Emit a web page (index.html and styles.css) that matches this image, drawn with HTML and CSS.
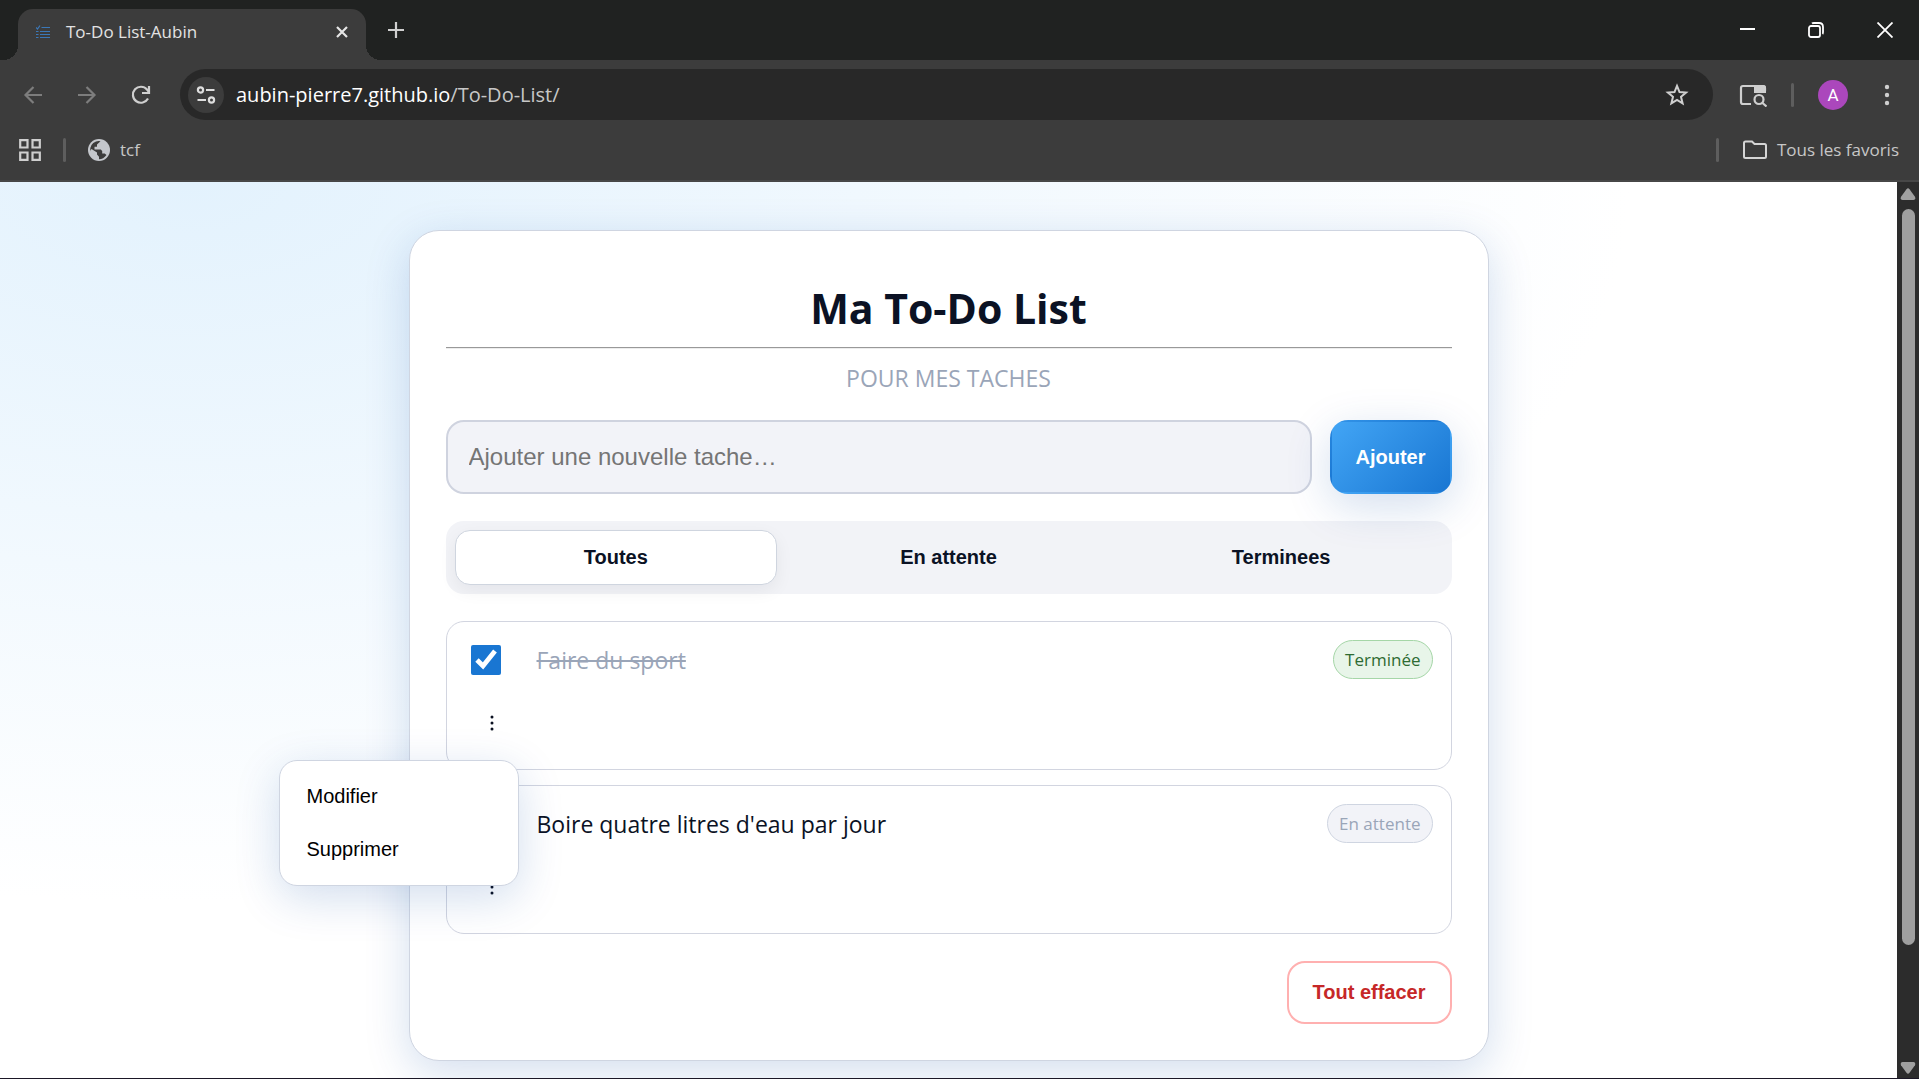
FILE: index.html
```html
<!DOCTYPE html>
<html lang="fr">
<head>
<meta charset="utf-8">
<meta name="viewport" content="width=device-width, initial-scale=1">
<title>To-Do List-Aubin</title>
<link rel="stylesheet" href="styles.css">
</head>
<body>
<div class="browser">
  <header class="chrome">
    <div class="titlebar">
      <div class="tab">
        <svg class="tab-favicon" width="14" height="14" viewBox="0 0 14 14" fill="none" stroke="#3b78b8" aria-hidden="true"><path d="M0 2.500l1.500 1.500L4 .5M5.500 2.500H14M0 6.500h2.500M4 6.500h10M0 9.500h2.500M4 9.500h10M0 12.500h2.500M4 12.500h10" stroke-width="1.200"/></svg>
        <span class="tab-title">To-Do List-Aubin</span>
        <button class="icon-btn tab-close" aria-label="Fermer l'onglet"><svg width="12" height="12" viewBox="0 0 12 12" stroke="#e6e6e6" stroke-width="2.200"><path d="M1 1l10 10M11 1L1 11"/></svg></button>
      </div>
      <button class="icon-btn new-tab" aria-label="Nouvel onglet"><svg width="16" height="16" viewBox="0 0 16 16" stroke="#d0d0d0" stroke-width="2.200"><path d="M8 0v16M0 8h16"/></svg></button>
      <div class="window-controls">
        <button class="icon-btn" aria-label="Réduire"><svg width="16" height="16" viewBox="0 0 16 16" stroke="#fff" stroke-width="2"><path d="M1 7h15"/></svg></button>
        <button class="icon-btn" aria-label="Restaurer"><svg width="16" height="16" viewBox="0 0 16 16" fill="none" stroke="#fff" stroke-width="1.800"><rect x="1" y="4" width="11" height="11" rx="2"/><path d="M4 1.500Q4.500 1 6 1h5q4 0 4 4v5q0 1.500-.5 2"/></svg></button>
        <button class="icon-btn" aria-label="Fermer"><svg width="16" height="16" viewBox="0 0 16 16" stroke="#fff" stroke-width="1.800"><path d="M.5.5l15 15M15.500.5l-15 15"/></svg></button>
      </div>
    </div>

    <div class="toolbar">
      <button class="icon-btn nav-btn" aria-label="Précédent"><svg width="20" height="20" viewBox="0 0 20 20" fill="none" stroke="#7d7d7d" stroke-width="2.200"><path d="M19 10H2M10.500 2L2.500 10l8 8"/></svg></button>
      <button class="icon-btn nav-btn" aria-label="Suivant"><svg width="20" height="20" viewBox="0 0 20 20" fill="none" stroke="#7d7d7d" stroke-width="2.200"><path d="M1 10h17M9.500 2l8 8-8 8"/></svg></button>
      <button class="icon-btn nav-btn" aria-label="Actualiser"><svg width="20" height="20" viewBox="0 0 20 20" fill="none" stroke="#cfcfcf" stroke-width="2.200"><path d="M17 13.500A8 8 0 1 1 16 4.500L18 7"/><path d="M18 1v7h-7"/></svg></button>
      <div class="omnibox">
        <button class="icon-btn site-info" aria-label="Informations sur le site"><svg width="20" height="20" viewBox="0 0 20 20" fill="none" stroke="#dedede" stroke-width="2.200"><circle cx="4.500" cy="5" r="2.600"/><path d="M10 5h8.500M1.500 15H10"/><circle cx="15.500" cy="15" r="2.600"/></svg></button>
        <span class="url"><span class="url-host">aubin-pierre7.github.io</span>/To-Do-List/</span>
        <button class="icon-btn" aria-label="Ajouter aux favoris"><svg width="24" height="24" viewBox="0 0 24 24" fill="none" stroke="#cfcfcf" stroke-width="2"><path d="M12 2.800l2.500 6.200 6.600.5-5.100 4.300 1.600 6.600L12 16.900l-5.600 3.500L8 13.800 2.900 9.500 9.500 9z"/></svg></button>
      </div>
      <div class="toolbar-end">
        <button class="icon-btn" aria-label="Rechercher dans la page"><svg width="28" height="24" viewBox="0 0 28 24" fill="none" stroke="#cfcfcf" stroke-width="2.200"><path d="M12 21H4q-2 0-2-2V5q0-2 2-2h20q2 0 2 2v3"/><path d="M15 2h9q3 0 3 3v5H15z" fill="#cfcfcf" stroke="none"/><circle cx="20" cy="16.500" r="4.500"/><path d="M23 19.500l4.500 4"/></svg></button>
        <span class="divider"></span>
        <button class="avatar" aria-label="Profil A">A</button>
        <button class="icon-btn" aria-label="Menu"><svg width="6" height="24" viewBox="0 0 6 24" fill="#cfcfcf"><circle cx="3" cy="4" r="2.200"/><circle cx="3" cy="12" r="2.200"/><circle cx="3" cy="20" r="2.200"/></svg></button>
      </div>
    </div>

    <nav class="bookmarks" aria-label="Favoris">
      <button class="icon-btn" aria-label="Applications"><svg width="22" height="22" viewBox="0 0 22 22" fill="none" stroke="#cfcfcf" stroke-width="2.200"><path d="M1.200 1.200h7.300v7.300H1.200zM13.500 1.200h7.300v7.300h-7.300zM1.200 13.500h7.300v7.300H1.200zM13.500 13.500h7.300v7.300h-7.300z"/></svg></button>
      <span class="divider"></span>
      <a class="bookmark" href="#"><svg width="22" height="22" viewBox="0 0 22 22" aria-hidden="true"><circle cx="11" cy="11" r="11" fill="#c4c7cc"/><path d="M12.500 2.200L9 5.500v2.300H6.500v2.700h6.300l1.400 1.500v2.500h2.500l1.800 1.500q-3 4.200-7.500 4.200v-2.500L9 15.500v-2L3.500 10Q2.300 11 2.200 12.500 1.500 5 8 2.500q2-.8 4.500-.3z" fill="#3c3c3c"/></svg>tcf</a>
      <div class="bookmarks-end">
        <span class="divider"></span>
        <button class="bookmark"><svg width="24" height="20" viewBox="0 0 24 20" fill="none" stroke="#d5d5d5" stroke-width="2" aria-hidden="true"><path d="M1 3q0-1.500 1.500-1.500H9L11.500 4h10Q23 4 23 5.500v11q0 1.500-1.500 1.500h-19Q1 18 1 16.500z"/></svg>Tous les favoris</button>
      </div>
    </nav>
  </header>

  <div class="viewport">
    <main class="page">
      <section class="card">
        <h1 class="title">Ma To-Do List</h1>
        <hr class="rule">
        <p class="subtitle">POUR MES TACHES</p>

        <form class="add-form">
          <input class="add-input" type="text" placeholder="Ajouter une nouvelle tache…" aria-label="Nouvelle tache">
          <button class="add-btn" type="button">Ajouter</button>
        </form>

        <div class="filters">
          <button class="filter filter-active">Toutes</button>
          <button class="filter">En attente</button>
          <button class="filter">Terminees</button>
        </div>

        <ul class="tasks">
          <li class="task">
            <input class="task-check" type="checkbox" id="task-1" checked>
            <label class="task-label task-label-done" for="task-1">Faire du sport</label>
            <span class="badge badge-done">Terminée</span>
            <div class="task-menu">
              <button class="kebab" aria-label="Options"><svg width="4" height="16" viewBox="0 0 4 16" fill="#0a1020"><circle cx="2" cy="2" r="1.500"/><circle cx="2" cy="8" r="1.500"/><circle cx="2" cy="14" r="1.500"/></svg></button>
              <div class="popup">
                <button class="popup-item">Modifier</button>
                <button class="popup-item">Supprimer</button>
              </div>
            </div>
          </li>
          <li class="task">
            <input class="task-check" type="checkbox" id="task-2">
            <label class="task-label" for="task-2">Boire quatre litres d'eau par jour</label>
            <span class="badge">En attente</span>
            <div class="task-menu">
              <button class="kebab" aria-label="Options"><svg width="4" height="16" viewBox="0 0 4 16" fill="#0a1020"><circle cx="2" cy="2" r="1.500"/><circle cx="2" cy="8" r="1.500"/><circle cx="2" cy="14" r="1.500"/></svg></button>
            </div>
          </li>
        </ul>

        <div class="actions">
          <button class="clear-btn">Tout effacer</button>
        </div>
      </section>
    </main>
    <div class="scrollbar" aria-hidden="true">
      <svg width="16" height="12" viewBox="0 0 16 12" fill="#a0a0a0"><path d="M6.500 1.200Q8-.5 9.500 1.200l5.500 7.500Q16 12 13.500 12h-11Q0 12 1 8.700z"/></svg>
      <span class="scroll-thumb"></span>
      <span class="scroll-rest"></span>
      <svg width="16" height="12" viewBox="0 0 16 12" fill="#a0a0a0"><path d="M6.500 10.800Q8 12.500 9.500 10.800L15 3.300Q16 0 13.500 0h-11Q0 0 1 3.300z"/></svg>
    </div>
  </div>
</div>
</body>
</html>
```
FILE: styles.css
```css
* {
  box-sizing: border-box;
}

body {
  margin: 0;
  font-family: "Open Sans", "Noto Sans", sans-serif;
  color: #0b1224;
}

button {
  margin: 0;
  padding: 0;
  border: 0;
  background: none;
  font-family: "Liberation Sans", Arial, sans-serif;
  font-size: 20px;
  color: #000;
  cursor: pointer;
}

svg {
  display: block;
  flex: none;
}

.browser {
  display: flex;
  flex-direction: column;
  height: 100vh;
  border-bottom: 1px solid #1b1726;
}

/* Browser chrome */
.chrome {
  flex: none;
  background: #3c3c3c;
  border-bottom: 2px solid #474747;
}

.titlebar {
  display: flex;
  align-items: flex-end;
  height: 60px;
  padding-left: 18px;
  background: #202221;
}

.tab {
  position: relative;
  display: flex;
  align-items: center;
  width: 348px;
  height: 51px;
  padding: 0 18px 6px;
  border-radius: 15px 15px 0 0;
  background: #3c3c3c;
}

.tab::before,
.tab::after {
  content: "";
  position: absolute;
  bottom: 0;
  width: 15px;
  height: 15px;
}

.tab::before {
  right: 100%;
  background: radial-gradient(circle at 0 0, transparent 15px, #3c3c3c 15px);
}

.tab::after {
  left: 100%;
  background: radial-gradient(circle at 100% 0, transparent 15px, #3c3c3c 15px);
}

.tab-title {
  flex: 1;
  margin-left: 16px;
  font-size: 17px;
  line-height: 24px;
  color: #e3e3e3;
}

.icon-btn {
  display: flex;
  align-items: center;
  justify-content: center;
}

.new-tab {
  height: 60px;
  margin-left: 22px;
}

.window-controls {
  display: flex;
  margin-left: auto;
}

.window-controls .icon-btn {
  width: 69px;
  height: 60px;
}

.toolbar {
  display: flex;
  align-items: center;
  padding: 9px 29px 0 6px;
}

.nav-btn {
  width: 54px;
  height: 51px;
}

.omnibox {
  flex: 1;
  display: flex;
  align-items: center;
  height: 51px;
  margin-left: 12px;
  padding: 0 24px 0 8px;
  border-radius: 26px;
  background: #282828;
}

.site-info {
  width: 36px;
  height: 36px;
  border-radius: 50%;
  background: #3c3c3c;
}

.url {
  flex: 1;
  margin-left: 12px;
  font-size: 20px;
  line-height: 28px;
  color: #c7c7c7;
}

.url-host {
  color: #fff;
}

.toolbar-end {
  display: flex;
  align-items: center;
  gap: 24px;
  margin-left: 26px;
}

.divider {
  width: 3px;
  height: 24px;
  border-radius: 2px;
  background: #5e5e5e;
}

.avatar {
  width: 30px;
  height: 30px;
  border-radius: 50%;
  background: #ab47bc;
  color: #fff;
  font-family: Roboto, sans-serif;
  font-size: 17px;
}

.toolbar-end .avatar + .icon-btn {
  margin-left: 12px;
}

.bookmarks {
  display: flex;
  align-items: center;
  gap: 22px;
  height: 60px;
  padding: 0 20px 0 19px;
}

.bookmark {
  display: flex;
  align-items: center;
  gap: 10px;
  font-family: "Open Sans", "Noto Sans", sans-serif;
  font-size: 17px;
  line-height: 24px;
  color: #c7c7c7;
  text-decoration: none;
}

.bookmarks-end {
  display: flex;
  align-items: center;
  gap: 24px;
  margin-left: auto;
}

/* Visible part of the site */
.viewport {
  flex: 1;
  display: flex;
  min-height: 0;
}

.page {
  flex: 1;
  min-width: 0;
  overflow: hidden;
  padding: 48px;
  background: radial-gradient(1800px 900px at 10% 0, #e3f2fd, #fff 80%);
}

.card {
  max-width: 1080px;
  margin: 0 auto;
  padding: 36px;
  border: 1px solid #cfd5e1;
  border-radius: 30px;
  background: #fff;
  box-shadow: 0 12px 45px rgba(13, 71, 161, 0.18);
}

.title {
  margin: 13px 0 11px;
  font-size: 41px;
  line-height: 56px;
  text-align: center;
}

.rule {
  margin: 0;
  border: 0;
  border-top: 1px solid #999;
  border-bottom: 1px solid #ededed;
}

.subtitle {
  margin: 11px 0 24px;
  font-size: 23px;
  line-height: 36px;
  text-align: center;
  color: #9aa5b8;
}

.add-form {
  display: flex;
  gap: 18px;
}

.add-input {
  flex: 1;
  min-width: 0;
  height: 74px;
  padding: 0 21px;
  border: 2px solid #cfd3df;
  border-radius: 18px;
  background: #f2f3f8;
  font-family: "Liberation Sans", Arial, sans-serif;
  font-size: 24px;
}

.add-input::placeholder {
  color: #757575;
}

.add-btn {
  padding: 0 24px;
  border: 2px solid transparent;
  border-radius: 18px;
  background: linear-gradient(135deg, #42a5f5, #1976d2);
  box-shadow: 0 12px 45px rgba(13, 71, 161, 0.18);
  font-weight: bold;
  color: #fff;
}

.filters {
  display: grid;
  grid-template-columns: repeat(3, 1fr);
  gap: 10px;
  margin-top: 27px;
  padding: 9px;
  border-radius: 18px;
  background: #f2f3f7;
}

.filter {
  height: 55px;
  border: 1px solid transparent;
  border-radius: 15px;
  font-weight: bold;
  color: #0b1224;
}

.filter-active {
  border-color: #cfd5df;
  background: #fff;
  box-shadow: 0 6px 18px rgba(15, 23, 42, 0.06);
}

.tasks {
  display: grid;
  gap: 15px;
  margin: 27px 0 0;
  padding: 0;
  list-style: none;
}

.task {
  display: grid;
  grid-template-columns: 54px 1fr auto;
  gap: 18px;
  align-items: center;
  padding: 18px;
  border: 1px solid #d2d5e0;
  border-radius: 18px;
}

.task-check {
  width: 30px;
  height: 30px;
  margin: 0 6px;
  accent-color: #1976d2;
}

.task-label {
  font-size: 23px;
  line-height: 36px;
}

.task-label-done {
  color: #9aa5b8;
  text-decoration: line-through;
}

.badge {
  padding: 6px 11px;
  border: 1px solid #cfd5e1;
  border-radius: 20px;
  background: #f2f3f8;
  font-size: 17px;
  line-height: 25px;
  color: #9aa5b8;
}

.badge-done {
  border-color: #a5d6a7;
  background: #e8f5e9;
  color: #2e6b32;
}

.task-menu {
  position: relative;
}

.kebab {
  display: flex;
  align-items: center;
  justify-content: center;
  width: 54px;
  height: 54px;
  padding-bottom: 3px;
}

.popup {
  position: absolute;
  z-index: 1;
  top: calc(100% + 9px);
  right: 0;
  width: 240px;
  padding: 9px;
  border: 1px solid #cfd5e1;
  border-radius: 18px;
  background: #fff;
  box-shadow: 0 12px 45px rgba(13, 71, 161, 0.18);
}

.popup-item {
  display: block;
  width: 100%;
  height: 53px;
  padding: 0 18px;
  text-align: left;
}

.actions {
  display: flex;
  justify-content: flex-end;
  margin-top: 27px;
}

.clear-btn {
  height: 63px;
  padding: 0 24px;
  border: 2px solid #ffb0b0;
  border-radius: 18px;
  font-weight: bold;
  color: #c62828;
}

/* Page scrollbar */
.scrollbar {
  display: flex;
  flex-direction: column;
  align-items: center;
  width: 22px;
  padding: 6px 0 4px;
  background: #2c2c2c;
}

.scroll-thumb {
  flex: 6;
  width: 13px;
  margin-top: 9px;
  border-radius: 7px;
  background: #9f9f9f;
}

.scroll-rest {
  flex: 1;
  margin-top: -6px;
}
```
